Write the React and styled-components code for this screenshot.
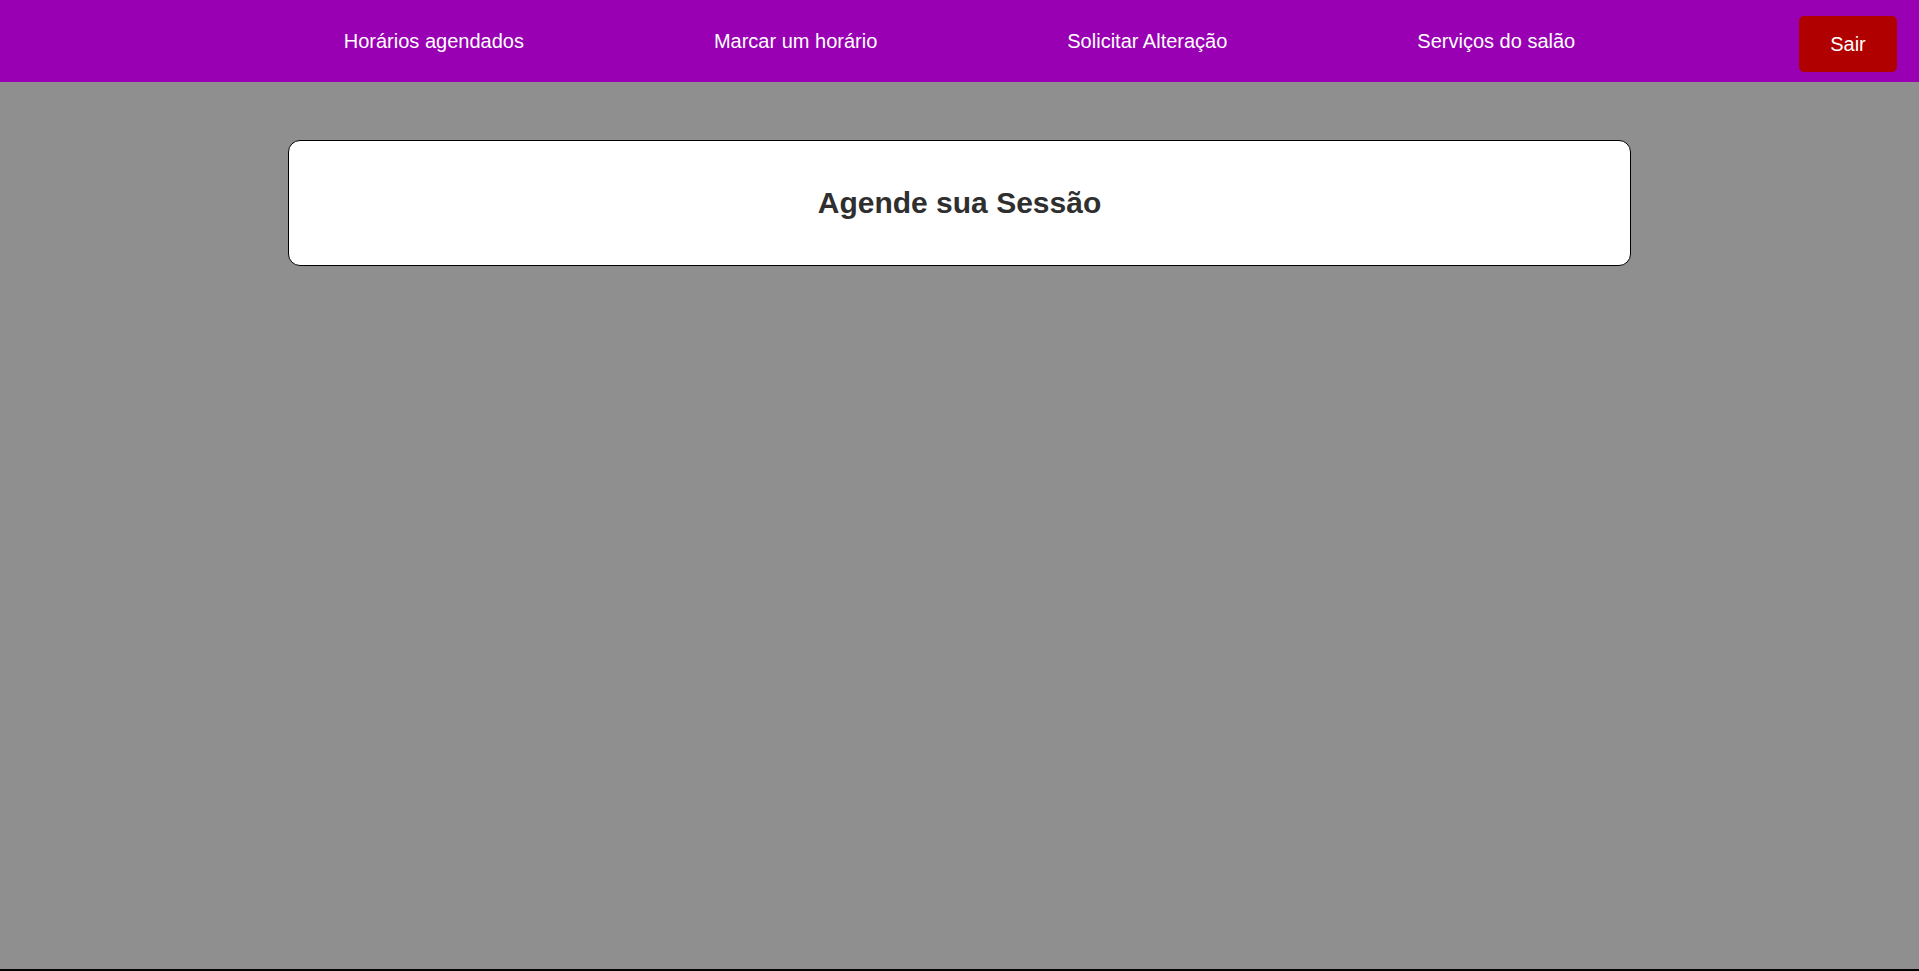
import React from 'react'
import styled, { createGlobalStyle } from 'styled-components'

const GlobalStyle = createGlobalStyle`
  html, body {
    margin: 0;
    padding: 0;
  }
  body {
    font-family: "Liberation Sans", Arial, sans-serif;
    background: #8f8f8f;
  }
`

const Page = styled.div`
  box-sizing: border-box;
  min-height: 100vh;
  background: #8f8f8f;
  border-bottom: 2px solid #000;
`

const Nav = styled.nav`
  display: grid;
  grid-template-columns: 1fr auto 1fr;
  align-items: center;
  height: 82px;
  background: #9900b4;
`

const Links = styled.ul`
  grid-column: 2;
  display: flex;
  gap: 190px;
  margin: 0;
  padding: 0;
  list-style: none;
`

const NavLink = styled.a`
  color: #fff;
  font-size: 20px;
  text-decoration: none;
  cursor: pointer;
`

const LogoutButton = styled.button`
  grid-column: 3;
  justify-self: end;
  align-self: start;
  margin: 16px 22px 0 0;
  width: 98px;
  height: 56px;
  border: none;
  border-radius: 5px;
  background: #b00000;
  color: #fff;
  font-family: "Liberation Sans", Arial, sans-serif;
  font-size: 20px;
  cursor: pointer;
`

const Card = styled.section`
  box-sizing: border-box;
  width: 70%;
  height: 126px;
  margin: 58px auto 0;
  display: flex;
  align-items: center;
  justify-content: center;
  background: #fff;
  border: 1px solid #000;
  border-radius: 12px;
`

const Title = styled.h1`
  margin: 0;
  font-size: 30px;
  font-weight: bold;
  color: #2f2f2f;
`

const links = ['Horários agendados', 'Marcar um horário', 'Solicitar Alteração', 'Serviços do salão']

const App = () => {
  return (
    <Page>
      <GlobalStyle />
      <Nav>
        <Links>
          {links.map(l => (
            <li key={l}><NavLink>{l}</NavLink></li>
          ))}
        </Links>
        <LogoutButton>Sair</LogoutButton>
      </Nav>
      <Card>
        <Title>Agende sua Sessão</Title>
      </Card>
    </Page>
  )
}

export default App
